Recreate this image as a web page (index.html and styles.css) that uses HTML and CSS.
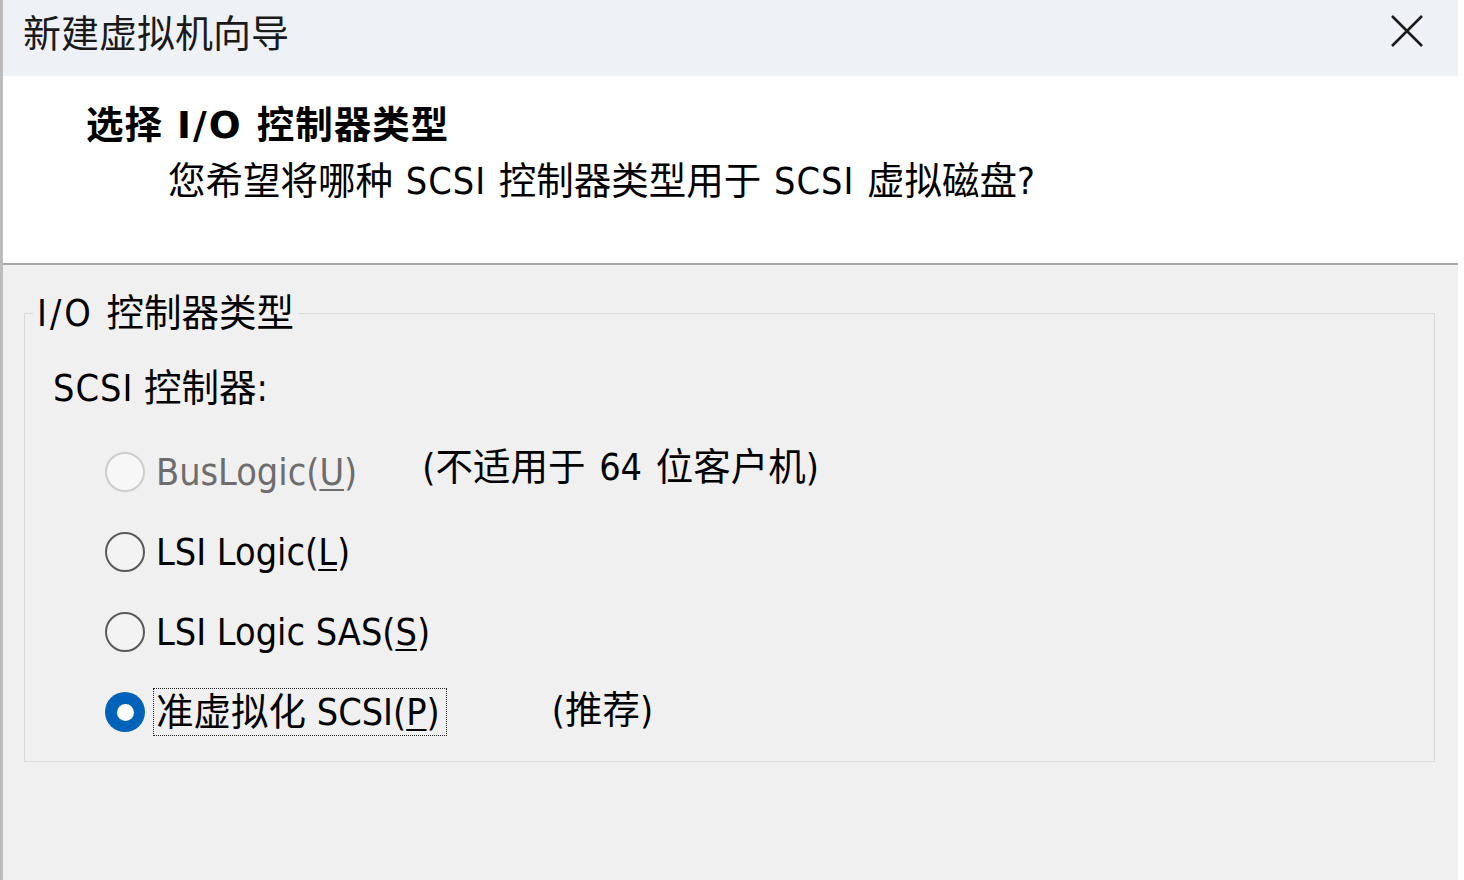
FILE: index.html
```html
<!DOCTYPE html>
<html lang="zh-CN">
<head>
<meta charset="utf-8">
<title>新建虚拟机向导</title>
<link rel="stylesheet" href="styles.css">
</head>
<body>
<div class="window">
  <div class="titlebar">
    <span class="title">新建虚拟机向导</span>
    <svg class="close" width="32" height="32" viewBox="0 0 32 32" aria-hidden="true">
      <path d="M1 1 L31 31 M31 1 L1 31" stroke="#1c1c1c" stroke-width="2.6" fill="none"/>
    </svg>
  </div>
  <div class="header">
    <div class="heading">选择 <span class="heading-latin">I/O</span> 控制器类型</div>
    <div class="subtitle">您希望将哪种 <span class="lat">SCSI</span> 控制器类型用于 <span class="lat">SCSI</span> 虚拟磁盘?</div>
  </div>
  <div class="content">
    <fieldset class="group">
      <legend class="group-title"><span class="io">I/O</span> 控制器类型</legend>
      <div class="group-label"><span class="lat">SCSI</span> 控制器:</div>
      <div class="options">
        <div class="row">
          <span class="radio radio-disabled"></span>
          <span class="opt opt-disabled">BusLogic(<u>U</u>)</span>
          <span class="note note-busl">(不适用于 64 位客户机)</span>
        </div>
        <div class="row">
          <span class="radio"></span>
          <span class="opt">LSI Logic(<u>L</u>)</span>
        </div>
        <div class="row">
          <span class="radio"></span>
          <span class="opt">LSI Logic SAS(<u>S</u>)</span>
        </div>
        <div class="row">
          <span class="radio radio-checked"></span>
          <span class="opt opt-focus">准虚拟化 SCSI(<u>P</u>)</span>
          <span class="note note-pv">(推荐)</span>
        </div>
      </div>
    </fieldset>
  </div>
</div>
</body>
</html>
```
FILE: styles.css
```css
html, body {
  margin: 0;
  padding: 0;
  background: #ffffff;
}
body {
  width: 1464px;
  height: 880px;
  overflow: hidden;
  font-family: "DejaVu Sans Condensed", "DejaVu Sans", "Noto Sans CJK SC", sans-serif;
  font-size: 37.5px;
  color: #000;
}
.window {
  box-sizing: border-box;
  width: 1458px;
  height: 880px;
  border-left: 3px solid #bcbcbc;
  display: flex;
  flex-direction: column;
  background: #f0f0f0;
}
.titlebar {
  box-sizing: border-box;
  height: 76px;
  flex: none;
  background: #eef2f7;
  display: flex;
  align-items: center;
  justify-content: space-between;
  padding: 0 35px 14px 20px;
}
.title {
  font-family: "Noto Sans CJK SC", sans-serif;
  font-size: 38px;
  line-height: 44px;
  color: #1a1a1a;
}
.close {
  display: block;
  flex: none;
}
.header {
  box-sizing: border-box;
  height: 189px;
  flex: none;
  background: #ffffff;
  border-bottom: 2px solid #a8a8a8;
  padding: 25px 0 0 83px;
}
.heading {
  font-family: "DejaVu Sans", "Noto Sans CJK SC", sans-serif;
  font-weight: 700;
  line-height: 48px;
  letter-spacing: 1px;
}
.heading-latin {
  font-family: "DejaVu Sans", sans-serif;
  font-weight: 700;
  letter-spacing: 2px;
}
.subtitle {
  margin-top: 8px;
  padding-left: 82px;
  line-height: 48px;
  word-spacing: 2px;
  letter-spacing: 0;
}
.lat {
  letter-spacing: 1px;
}
.io {
  letter-spacing: 3px;
}
.content {
  flex: 1;
  padding: 24px 23px 0 21px;
}
.group {
  margin: 0;
  padding: 0 0 9px 0;
  min-width: 0;
  border: 1px solid #dadada;
}
.group-title {
  margin-left: 8px;
  padding: 0 5px 0 4px;
  line-height: 48px;
  word-spacing: 2px;
}
.group-label {
  margin-top: 27px;
  padding-left: 28px;
  line-height: 48px;
}
.options {
  margin-top: 20px;
  padding-left: 80px;
}
.row {
  height: 80px;
  display: flex;
  align-items: center;
}
.radio {
  box-sizing: border-box;
  width: 40px;
  height: 40px;
  flex: none;
  border-radius: 50%;
  border: 2.5px solid #5a5a5a;
  background: #f3f3f3;
  display: flex;
  align-items: center;
  justify-content: center;
}
.radio-disabled {
  border-color: #cdcdcd;
  background: #f7f7f7;
}
.radio-checked {
  border: none;
  background: #0062b8;
}
.radio-checked::after {
  content: "";
  width: 17px;
  height: 17px;
  border-radius: 50%;
  background: #ffffff;
}
.opt {
  margin-left: 8px;
  padding: 0 2px;
  line-height: 46px;
  border: 1px dotted transparent;
}
.opt-disabled {
  color: #6d6d6d;
}
.opt-focus {
  padding-right: 6px;
  border-color: #222;
}
u {
  text-decoration-thickness: 2px;
  text-underline-offset: 4px;
}
.note {
  line-height: 46px;
  word-spacing: 3px;
}
.note-busl {
  margin-left: 62px;
  margin-bottom: 10px;
}
.note-pv {
  margin-left: 105px;
  margin-bottom: 4px;
}
```
